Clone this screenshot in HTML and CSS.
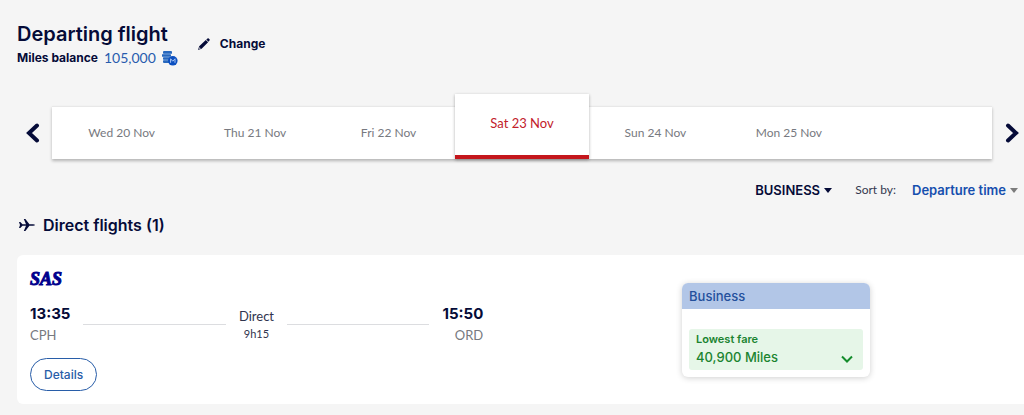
FILE: index.html
```html
<!DOCTYPE html>
<html lang="en">
<head>
<meta charset="utf-8">
<title>Departing flight</title>
<meta name="viewport" content="width=device-width, initial-scale=1">
<link rel="stylesheet" href="styles.css">
</head>
<body>
<header class="page-header">
  <div>
    <h1 class="title">Departing flight</h1>
    <p class="balance"><strong>Miles balance</strong> <span class="miles">105,000</span>
      <svg class="coins" viewBox="0 0 16 15" aria-hidden="true">
        <g fill="#2868bd"><rect x="1" y="0" width="9" height="3" rx="1"/><rect x="0" y="3" width="9" height="3" rx="1"/><rect x="1" y="6" width="9" height="3" rx="1"/><rect x="1" y="9" width="9" height="3" rx="1"/></g>
        <path d="M1 3h8M1 6h8M1 9h6" stroke="#8db3e2" stroke-width=".8"/>
        <circle cx="10.8" cy="9.8" r="4.8" fill="#0b4fc0"/>
        <path d="M8.6 11.8v-4l2.2 2.4L13 7.800v4" fill="none" stroke="#a9c6f5" stroke-width="1"/>
      </svg>
    </p>
  </div>
  <button class="change" type="button">
    <svg class="pencil" viewBox="0 0 12 12" aria-hidden="true"><path d="M0 12l1.200-3.800L7.800 2l2.300 2.300-6.500 6.400zM8.300 1.600l1.200-1.100q.6-.5 1.200 0l.8.8q.5.600 0 1.200l-1.100 1.200z" fill="#050b38"/><path d="M.4 11.600l1-2.600 1.600 1.600z" fill="#9a9cab"/></svg>
    Change
  </button>
</header>

<nav class="dates" aria-label="Departure date">
  <button class="arrow" type="button" aria-label="Previous dates"><svg viewBox="0 0 14 20"><path d="M11 2.500L3 10l8 7.500"/></svg></button>
  <div class="strip">
    <button class="day" type="button">Wed 20 Nov</button>
    <button class="day" type="button">Thu 21 Nov</button>
    <button class="day" type="button">Fri 22 Nov</button>
    <button class="day active" type="button" aria-current="date">Sat 23 Nov</button>
    <button class="day" type="button">Sun 24 Nov</button>
    <button class="day" type="button">Mon 25 Nov</button>
  </div>
  <button class="arrow" type="button" aria-label="Next dates"><svg viewBox="0 0 14 20"><path d="M3 2.500L11 10l-8 7.500"/></svg></button>
</nav>

<div class="filters">
  <span class="picker">
    <select class="cabin" aria-label="Cabin"><option>BUSINESS</option></select>
    <svg class="caret" viewBox="0 0 8 5" aria-hidden="true"><path d="M0 0h8L4 5z" fill="#050b38"/></svg>
  </span>
  <label class="sort-label" for="sort">Sort by:</label>
  <span class="picker">
    <select class="sort" id="sort"><option>Departure time</option></select>
    <svg class="caret" viewBox="0 0 8 5" aria-hidden="true"><path d="M0 0h8L4 5z" fill="#7c7c7c"/></svg>
  </span>
</div>

<main>
  <h2 class="section-title">
    <svg class="plane" viewBox="0 0 16 14" aria-hidden="true"><path d="M0 4h1.300L3.500 6.200H7L4.800 1h1.600l4 5.200h3.600q1.800.1 2 .8-.2.700-2 .8h-3.600L6.400 13H4.800L7 7.800H3.500L1.300 10H0l1-3z" fill="#050b38"/></svg>
    Direct flights (1)
  </h2>
  <article class="flight">
    <div class="journey">
      <div class="sas">SAS</div>
      <div class="leg">
        <div><div class="time">13:35</div><div class="airport">CPH</div></div>
        <span class="line"></span>
        <div class="stops"><div class="direct">Direct</div><div class="duration">9h15</div></div>
        <span class="line"></span>
        <div class="arrival"><div class="time">15:50</div><div class="airport">ORD</div></div>
      </div>
      <button class="details" type="button">Details</button>
    </div>
    <section class="fare">
      <h3 class="fare-head">Business</h3>
      <button class="offer" type="button">
        <span><span class="lowest">Lowest fare</span><span class="price">40,900 Miles</span></span>
        <svg class="chevron" viewBox="0 0 12 8" aria-hidden="true"><path d="M1 1.500l5 5 5-5" fill="none" stroke="#148c2c" stroke-width="2"/></svg>
      </button>
    </section>
  </article>
</main>
</body>
</html>
```
FILE: styles.css
```css
* { box-sizing: border-box; }
body {
  margin: 0;
  padding: 20px 0 11px 17px;
  background: #f5f5f5;
  color: #050b38;
  font-family: Lato, "Liberation Sans", sans-serif;
  font-size: 13px;
  overflow-x: hidden;
}
h1, h2, h3, p { margin: 0; }
button, select {
  margin: 0;
  padding: 0;
  border: 0;
  background: none;
  color: inherit;
  font: inherit;
  cursor: pointer;
}
svg { display: block; flex: none; }

.page-header { display: flex; align-items: center; gap: 20px; height: 48px; }
.title { font: 600 20px/28px Inter, sans-serif; }
.balance { display: flex; align-items: center; gap: 6px; line-height: 20px; }
.balance strong { font: 700 12px/20px Inter, sans-serif; }
.miles { font: 14px/20px Lato, sans-serif; color: #285cae; }
.coins { width: 16px; height: 15px; }
.change { display: flex; align-items: center; gap: 10px; font: 700 12px/20px Inter, sans-serif; }
.pencil { width: 12px; height: 12px; }

.dates { display: flex; align-items: center; padding: 38px 5px 0 9px; }
.arrow { display: flex; flex: none; }
.arrow svg { width: 14px; height: 20px; }
.arrow path { fill: none; stroke: #050b38; stroke-width: 4; stroke-linecap: round; }
.strip {
  display: grid;
  grid-template-columns: repeat(7, 1fr);
  flex: 1;
  height: 53px;
  margin: 0 13px 0 12px;
  padding: 0 3px;
  background: #fff;
  border-top: 1px solid #e8e8e8;
  box-shadow: 0 2px 3px #00000044;
}
.day { padding-bottom: 2px; color: #777980; font-size: 12px; }
.day.active {
  margin-top: -13px;
  padding-bottom: 4px;
  background: #fff;
  border-bottom: 4px solid #c4161c;
  box-shadow: 0 1px 3px #00000050;
  color: #c2202a;
  font-size: 13px;
}

.filters { display: flex; justify-content: flex-end; align-items: center; padding: 20px 6px 0 0; line-height: 22px; }
.picker { display: flex; align-items: center; gap: 4px; }
.picker select { appearance: none; line-height: 22px; }
.caret { width: 8px; height: 5px; }
.cabin { font: 600 13px Inter, sans-serif; }
.sort { font: 600 13px Inter, sans-serif; color: #164fae; }
.sort-label { margin: 0 16px 0 23px; color: #34384f; font-size: 12px; }

.section-title { display: flex; align-items: center; gap: 8px; padding: 12px 0 18px 2px; font: 600 16px/24px Inter, sans-serif; }
.plane { width: 16px; height: 14px; }
.flight {
  display: flex;
  align-items: flex-start;
  padding: 13px 0 13px 13px;
  background: #fff;
  border-radius: 6px 0 0 6px;
}
.journey { flex: 0 0 454px; flex-basis: 45.6%; }
.sas { font: italic bold 18px/22px "Liberation Serif", serif; color: #00008c; -webkit-text-stroke: 1px #00008c; }
.leg { display: flex; align-items: center; padding-top: 13px; }
.time { font: 700 15px/22px Inter, sans-serif; }
.airport { font-size: 13px; line-height: 20px; color: #777980; }
.arrival { text-align: right; }
.line { flex: 1; height: 1px; margin: 0 13px; background: #dcdde0; }
.stops { text-align: center; color: #30344e; }
.direct { font-size: 13px; line-height: 20px; }
.duration { font-size: 11px; line-height: 16px; }
.details {
  margin-top: 13px;
  padding: 0 13px;
  border: 1px solid #285da8;
  border-radius: 17px;
  color: #285da8;
  font: 500 12px/31px Inter, sans-serif;
}
.fare {
  flex: 0 0 188px;
  margin: 15px 0 0 20%;
  border-radius: 6px;
  background: #fff;
  box-shadow: 0 1px 6px #00000030;
  overflow: hidden;
}
.fare-head { padding: 0 7px; background: #b2c6e7; color: #24509c; font: 500 13px/26px Inter, sans-serif; }
.offer {
  display: flex;
  align-items: flex-end;
  justify-content: space-between;
  width: 174px;
  margin: 20px 7px 7px;
  padding: 1px 10px 3px 7px;
  border-radius: 3px;
  background: #e6f6e8;
  color: #1b8430;
  text-align: left;
}
.offer span { display: block; }
.lowest { font: 600 11px/18px Inter, sans-serif; }
.price { font: 500 13px/19px Inter, sans-serif; }
.chevron { width: 12px; height: 8px; margin-bottom: 4px; }
```
